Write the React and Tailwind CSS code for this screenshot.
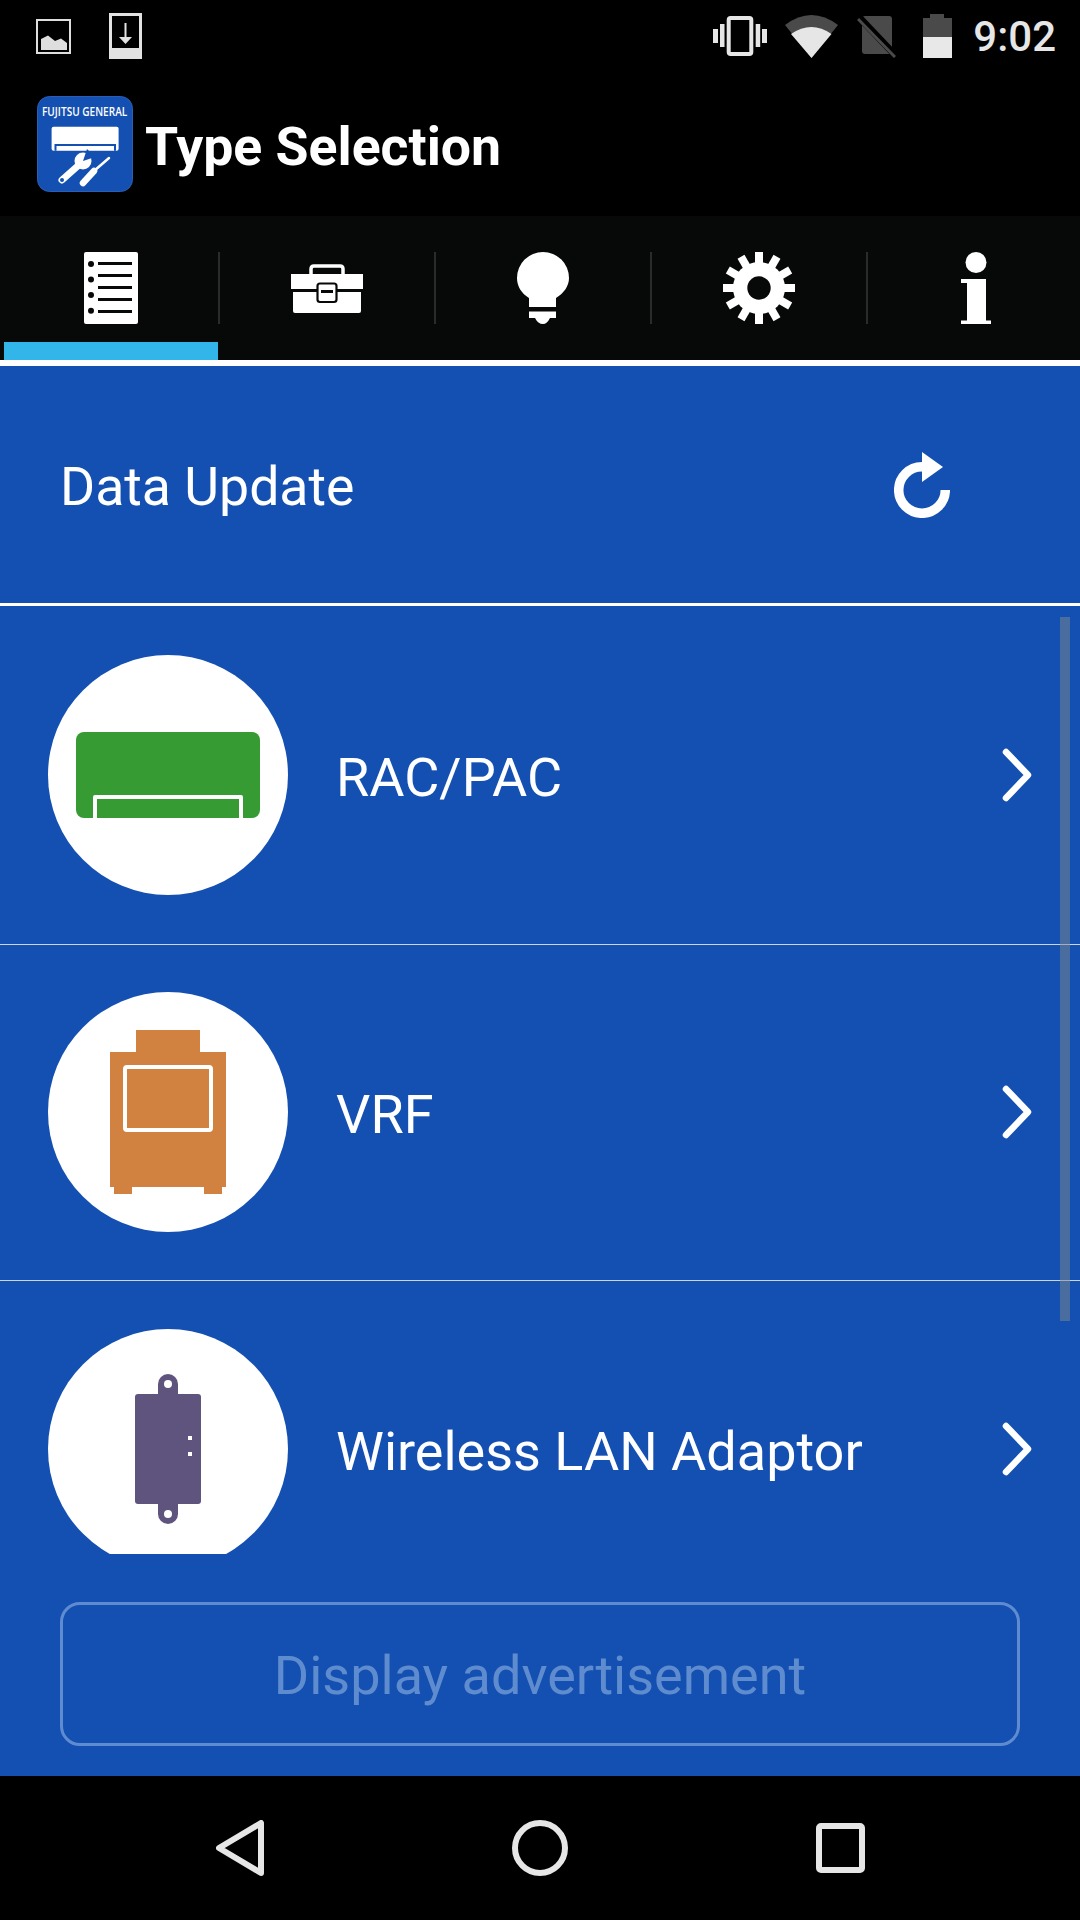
import React from "react";

function ImageIcon() {
  return (
    <svg width="35" height="35" viewBox="0 0 35 35">
      <rect x="1" y="1" width="33" height="33" fill="none" stroke="#dedede" strokeWidth="2" />
      <path d="M5 31V20L12 16.5L19 22L25 19.5L31 24V31Z" fill="#dedede" />
    </svg>
  );
}

function DownloadIcon() {
  return (
    <svg width="33" height="46" viewBox="0 0 33 46">
      <rect width="33" height="46" fill="#e2e2e2" />
      <rect x="3" y="3" width="27" height="32" fill="#000" />
      <path d="M15.5 10H17.5V24H23L16.5 31L10 24H15.5Z" fill="#e2e2e2" />
    </svg>
  );
}

function VibrateIcon() {
  return (
    <svg width="54" height="40" viewBox="0 0 54 40">
      <rect x="15.7" y="2" width="22.6" height="36" rx="2" fill="none" stroke="#e6e6e6" strokeWidth="4" />
      <rect x="0" y="13" width="5" height="14" fill="#e6e6e6" />
      <rect x="7" y="8" width="4.5" height="23" fill="#e6e6e6" />
      <rect x="42.7" y="8" width="4.5" height="23" fill="#e6e6e6" />
      <rect x="49" y="13" width="5" height="14" fill="#e6e6e6" />
    </svg>
  );
}

function WifiIcon() {
  return (
    <svg width="53" height="43" viewBox="0 0 53 43">
      <path d="M26.5 43L0 10Q26.5 -10 53 10Z" fill="#4a4a4a" />
      <path d="M26.5 43L6 19Q26.5 5 46.5 19Z" fill="#e6e6e6" />
    </svg>
  );
}

function SimIcon() {
  return (
    <svg width="39" height="42" viewBox="0 0 39 42">
      <path d="M8 0H32Q35 0 35 3V35Q35 38 32 38H8Q5 38 5 35V3Q5 0 8 0Z" fill="#4a4a4a" />
      <path d="M0 -1L40 41" stroke="#000" strokeWidth="7" />
      <path d="M1 3L38 41" stroke="#4a4a4a" strokeWidth="3" />
    </svg>
  );
}

function BatteryIcon() {
  return (
    <svg width="29" height="44" viewBox="0 0 29 44">
      <path d="M7 0H21V4H29V23H0V4H7Z" fill="#4a4a4a" />
      <rect x="0" y="23" width="29" height="21" fill="#e8e8e8" />
    </svg>
  );
}

function AppLogo() {
  return (
    <svg width="96" height="96" viewBox="0 0 96 96">
      <rect x="0.5" y="0.5" width="95" height="95" rx="12" fill="#1450b1" stroke="#2a5fb5" />
      <text transform="translate(5 19.5) scale(0.84 1)" fontFamily="'Open Sans', sans-serif" fontWeight="600" fontSize="12" fill="#fff">
        FUJITSU GENERAL
      </text>
      <rect x="14.6" y="30.7" width="67" height="24" rx="2" fill="#fff" />
      <path d="M18.5 54.7V49H78V54.7" fill="none" stroke="#1450b1" strokeWidth="2" />
      <path d="M25 84L43 68" stroke="#fff" strokeWidth="7" strokeLinecap="round" />
      <circle cx="46" cy="65" r="8.5" fill="#fff" />
      <path d="M46 65L50 53L58 61Z" fill="#1450b1" />
      <circle cx="25" cy="84" r="2" fill="#1450b1" />
      <path d="M46 87L57 75" stroke="#fff" strokeWidth="6.5" strokeLinecap="round" />
      <path d="M57 75L72 62" stroke="#fff" strokeWidth="2.5" strokeLinecap="round" />
    </svg>
  );
}

function ListIcon() {
  return (
    <svg width="54" height="72" viewBox="0 0 54 72">
      <rect width="54" height="72" rx="2" fill="#fff" />
      {[12, 27.5, 43, 58.7].map((y) => (
        <circle key={y} cx="7" cy={y} r="3" fill="#070909" />
      ))}
      {[10, 22, 34, 46, 58].map((y) => (
        <rect key={y} x="14" y={y} width="34" height="3" fill="#070909" />
      ))}
    </svg>
  );
}

function ToolboxIcon() {
  return (
    <svg width="72" height="49" viewBox="0 0 72 49">
      <path d="M20 12V5Q20 2 23 2H49Q52 2 52 5V12" fill="none" stroke="#fff" strokeWidth="3.5" />
      <rect x="0" y="10" width="72" height="15" fill="#fff" />
      <path d="M2 28H70V47Q70 49 68 49H4Q2 49 2 47Z" fill="#fff" />
      <rect x="26.5" y="19.5" width="19" height="18.5" rx="2.5" fill="#fff" stroke="#070909" strokeWidth="2.2" />
      <rect x="30" y="26" width="12" height="3" fill="#070909" />
    </svg>
  );
}

function BulbIcon() {
  return (
    <svg width="52" height="72" viewBox="0 0 52 72">
      <path d="M12 55V46C4 41 0 34 0 26A26 26 0 0 1 52 26C52 34 47 41 39 46V55Z" fill="#fff" />
      <path d="M12 59.5H39V66H33Q30 72 26 72Q21 72 18 66H12Z" fill="#fff" />
    </svg>
  );
}

function GearIcon() {
  const angles = [0, 30, 60, 90, 120, 150, 180, 210, 240, 270, 300, 330];
  return (
    <svg width="72" height="72" viewBox="0 0 72 72">
      {angles.map((a) => (
        <rect key={a} x="32" y="0" width="8" height="20" fill="#fff" transform={`rotate(${a} 36 36)`} />
      ))}
      <circle cx="36" cy="36" r="26" fill="#fff" />
      <circle cx="36" cy="36" r="11.7" fill="#070909" />
    </svg>
  );
}

function InfoIcon() {
  return (
    <svg width="30" height="72" viewBox="0 0 30 72">
      <circle cx="15" cy="10.5" r="10.5" fill="#fff" />
      <path d="M0 27H25V68.5H30V72H0V68.5H6V31H0Z" fill="#fff" />
    </svg>
  );
}

function RefreshIcon() {
  return (
    <svg width="56" height="66" viewBox="0 0 56 66">
      <path d="M51.3 38A23.3 23.3 0 1 1 28 14.7" fill="none" stroke="#fff" strokeWidth="9.5" />
      <path d="M28 0L49 15L28 30Z" fill="#fff" />
    </svg>
  );
}

function Chevron() {
  return (
    <svg width="30" height="54" viewBox="0 0 30 54">
      <path d="M4 4L26 27L4 50" fill="none" stroke="#fff" strokeWidth="6.5" strokeLinecap="round" strokeLinejoin="round" />
    </svg>
  );
}

function AcUnit() {
  return (
    <svg width="240" height="240" viewBox="0 0 240 240">
      <rect x="28" y="77" width="184" height="86" rx="8" fill="#359b32" />
      <path d="M47 163V142H193V163" fill="none" stroke="#fff" strokeWidth="4" strokeLinejoin="round" />
    </svg>
  );
}

function VrfUnit() {
  return (
    <svg width="240" height="240" viewBox="0 0 240 240">
      <path d="M88 38H152V60H178V195H174V202H156V195H84V202H66V195H62V60H88Z" fill="#d28240" />
      <rect x="77" y="75" width="86" height="63" rx="2" fill="none" stroke="#fff" strokeWidth="4" />
    </svg>
  );
}

function AdaptorUnit() {
  return (
    <svg width="240" height="240" viewBox="0 0 240 240">
      <rect x="110" y="45" width="20" height="150" rx="10" fill="#5f547e" />
      <rect x="87" y="65" width="66" height="110" rx="3" fill="#5f547e" />
      <circle cx="120" cy="55" r="4" fill="#fff" />
      <circle cx="120" cy="185" r="4" fill="#fff" />
      <rect x="140" y="107" width="4" height="4" fill="#fff" />
      <rect x="140" y="123" width="4" height="4" fill="#fff" />
    </svg>
  );
}

const tabs = [
  { icon: <ListIcon />, active: true },
  { icon: <ToolboxIcon /> },
  { icon: <BulbIcon /> },
  { icon: <GearIcon /> },
  { icon: <InfoIcon />, last: true },
];

const rows = [
  { label: "RAC/PAC", art: <AcUnit />, cls: "h-[339px] pt-[49px] border-b border-[#c8d5ea]" },
  { label: "VRF", art: <VrfUnit />, cls: "h-[336px] pt-[47px] border-b border-[#c8d5ea]" },
  { label: "Wireless LAN Adaptor", art: <AdaptorUnit />, cls: "h-[337px] pt-[48px]" },
];

export default function App() {
  return (
    <div className="w-[1080px] h-[1920px] flex flex-col bg-black overflow-hidden font-['Roboto',sans-serif] text-white">
      {/* status bar */}
      <div className="h-[72px] flex items-center justify-between pl-[36px] pr-[24px] shrink-0">
        <div className="flex items-center gap-[38px]">
          <ImageIcon />
          <DownloadIcon />
        </div>
        <div className="flex items-center">
          <VibrateIcon />
          <div className="ml-[18px]"><WifiIcon /></div>
          <div className="ml-[19px] mt-[2px]"><SimIcon /></div>
          <div className="ml-[27px]"><BatteryIcon /></div>
          <span className="ml-[21px] text-[42px] leading-none font-medium text-[#e6e6e6] mt-[2px]">9:02</span>
        </div>
      </div>

      {/* action bar */}
      <div className="h-[144px] flex items-center pl-[37px] shrink-0">
        <AppLogo />
        <h1 className="ml-[12px] text-[53.6px] leading-none font-bold mt-[6px]">Type Selection</h1>
      </div>

      {/* tabs */}
      <div className="h-[144px] flex pl-[4px] bg-[#070909] shrink-0">
        {tabs.map((t, i) => (
          <div key={i} className="w-[216px] shrink-0 flex flex-col pt-[36px]">
            <div className={`h-[72px] flex items-center justify-center ${t.last ? "" : "border-r-2 border-[#2a2c2c]"}`}>
              {t.icon}
            </div>
            <div className={`mt-[18px] h-[18px] mr-[2px] ${t.active ? "bg-[#32b5e8]" : ""}`} />
          </div>
        ))}
      </div>

      {/* blue body */}
      <div className="flex-1 flex flex-col bg-[#1450b1] border-t-[6px] border-white">
        <div className="h-[240px] shrink-0 flex items-center justify-between pl-[60px] pr-[130px] border-b-[3px] border-white">
          <span className="text-[53.6px] leading-none mt-[5px]">Data Update</span>
          <RefreshIcon />
        </div>

        <div className="relative h-[948px] shrink-0 overflow-hidden">
          {rows.map((r) => (
            <div key={r.label} className={`flex items-start pl-[48px] ${r.cls}`}>
              <div className="w-[240px] h-[240px] rounded-full bg-white shrink-0">{r.art}</div>
              <span className="ml-[48px] mt-[93px] text-[54px] leading-[60px]">{r.label}</span>
              <div className="ml-auto mr-[48px] mt-[93px]"><Chevron /></div>
            </div>
          ))}
          <div className="absolute left-[1060px] top-[11px] w-[10px] h-[704px] bg-[#7f8a8f]/50" />
        </div>

        <div className="mt-[48px] mx-[60px] h-[144px] shrink-0 flex items-center justify-center rounded-[20px] border-[3px] border-[#5f8bd0]">
          <span className="text-[54px] leading-none text-[#5f8ccf] mt-[3px]">Display advertisement</span>
        </div>
      </div>

      {/* nav bar */}
      <div className="h-[144px] flex items-center pl-[216px] gap-[248px] bg-black shrink-0">
        <svg width="48" height="56" viewBox="0 0 48 56">
          <path d="M45 3V53L3 28Z" fill="none" stroke="#e6e6e6" strokeWidth="6" strokeLinejoin="round" />
        </svg>
        <svg width="56" height="56" viewBox="0 0 56 56">
          <circle cx="28" cy="28" r="25" fill="none" stroke="#e6e6e6" strokeWidth="6" />
        </svg>
        <svg width="49" height="50" viewBox="0 0 49 50">
          <rect x="3" y="3" width="43" height="44" rx="2" fill="none" stroke="#e6e6e6" strokeWidth="6" />
        </svg>
      </div>
    </div>
  );
}
